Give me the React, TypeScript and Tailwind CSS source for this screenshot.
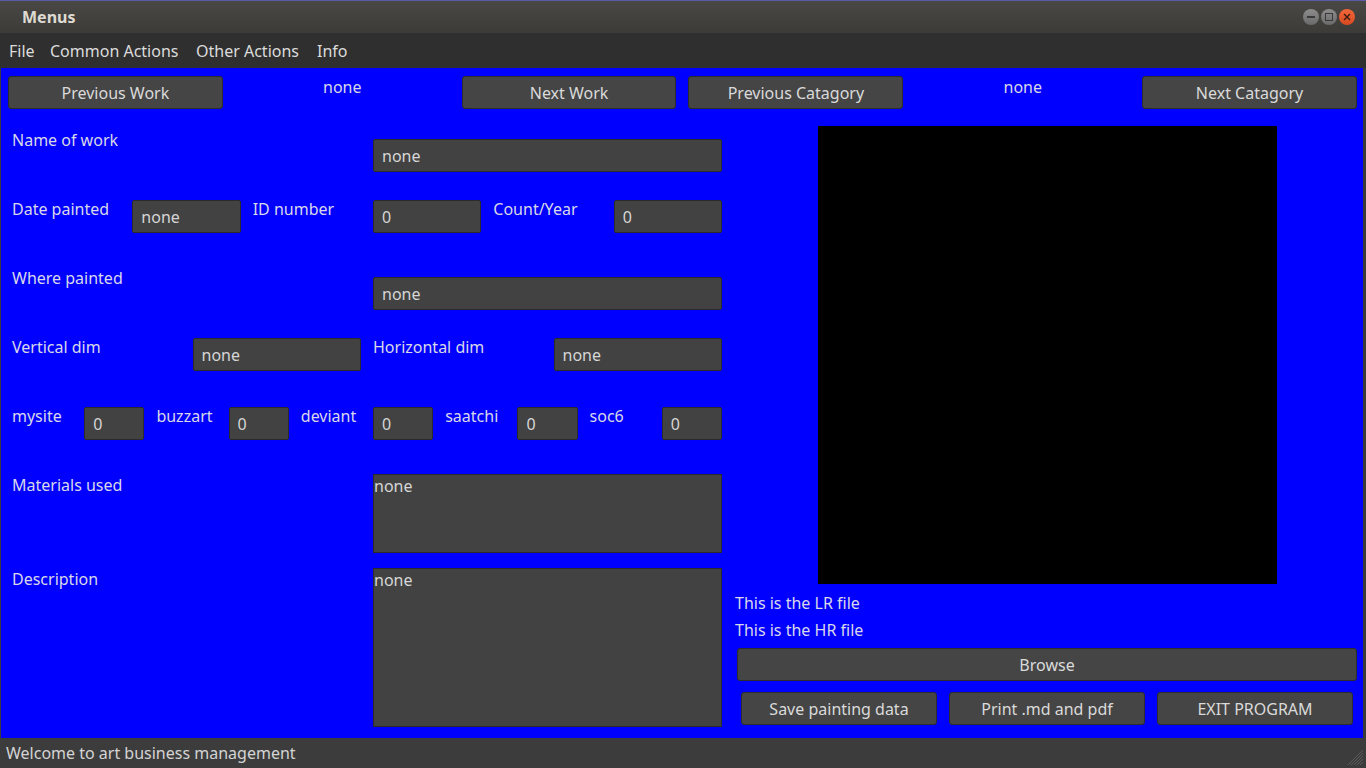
import React from "react";

const btn =
  "h-[33px] bg-[#454545] border border-[#2c2c2c] rounded-[3px] text-[#dadada] flex items-center justify-center leading-none";
const field =
  "h-[33px] bg-[#424242] border border-[#2b2b2b] rounded-[2px] text-[#d6d6d6] flex items-center px-[8px] leading-none";
const label = "text-[#d8d8e8] leading-[20px] whitespace-nowrap";

function Field({ value, className = "" }: { value: string; className?: string }) {
  return <div className={`${field} ${className}`}>{value}</div>;
}

function WindowButtons() {
  return (
    <div className="flex items-center gap-[2px] pr-[11px]">
      <div className="w-[16px] h-[16px] rounded-full bg-gradient-to-b from-[#8d8d8d] to-[#6a6a6a] flex items-center justify-center">
        <div className="w-[8px] h-[2px] bg-[#3a3a3a]" />
      </div>
      <div className="w-[16px] h-[16px] rounded-full bg-gradient-to-b from-[#8d8d8d] to-[#6a6a6a] flex items-center justify-center">
        <div className="w-[8px] h-[8px] border border-[#3a3a3a]" />
      </div>
      <div className="w-[16px] h-[16px] rounded-full bg-gradient-to-b from-[#f2683a] to-[#d9481f] flex items-center justify-center">
        <svg width="8" height="8" viewBox="0 0 8 8">
          <path d="M1 1L7 7M7 1L1 7" stroke="#3a1a10" strokeWidth="1.4" />
        </svg>
      </div>
    </div>
  );
}

export default function App() {
  return (
    <div className="w-[1366px] h-[768px] flex flex-col bg-[#3a3a3a] font-['Noto_Sans',sans-serif] text-[16px] overflow-hidden">
      {/* Title bar */}
      <div className="h-[33px] flex items-center justify-between border-t border-[#5a5aa8] bg-gradient-to-b from-[#4a4844] to-[#3c3b37]">
        <span className="pl-[22px] font-bold text-[#dfdbd2]">Menus</span>
        <WindowButtons />
      </div>

      {/* Menu bar */}
      <div className="h-[35px] flex items-center bg-[#2f2f2f] text-[#dcdcdc] pl-[9px]">
        <span className="w-[41px]">File</span>
        <span className="w-[146px]">Common Actions</span>
        <span className="w-[121px]">Other Actions</span>
        <span>Info</span>
      </div>

      {/* Main area */}
      <div className="flex-1 ml-[1px] mr-[3px] bg-[#0000ff] flex flex-col">
        <div className="ml-[7px] mt-[8px] w-[1349px] grid grid-cols-6 gap-x-[12px]">
          <div className={btn}>Previous Work</div>
          <div className="text-center text-[#d8d8e8] leading-[20px] pt-[1px]">none</div>
          <div className={btn}>Next Work</div>
          <div className={btn}>Previous Catagory</div>
          <div className="text-center text-[#d8d8e8] leading-[20px] pt-[1px]">none</div>
          <div className={btn}>Next Catagory</div>
        </div>

        <div className="flex mt-[17px]">
          {/* Left form */}
          <div className="ml-[11px] w-[710px] flex flex-col">
            <div className="mt-[4px] grid grid-cols-2 gap-x-[12px]">
              <div className={label}>Name of work</div>
              <Field value="none" className="mt-[9px]" />
            </div>

            <div className="mt-[27px] grid grid-cols-6 gap-x-[12px]">
              <div className={label}>Date painted</div>
              <Field value="none" className="mt-[1px]" />
              <div className={label}>ID number</div>
              <Field value="0" className="mt-[1px]" />
              <div className={label}>Count/Year</div>
              <Field value="0" className="mt-[1px]" />
            </div>

            <div className="mt-[35px] grid grid-cols-2 gap-x-[12px]">
              <div className={label}>Where painted</div>
              <Field value="none" className="mt-[9px]" />
            </div>

            <div className="mt-[27px] grid grid-cols-4 gap-x-[12px]">
              <div className={label}>Vertical dim</div>
              <Field value="none" className="mt-[1px]" />
              <div className={label}>Horizontal dim</div>
              <Field value="none" className="mt-[1px]" />
            </div>

            <div className="mt-[35px] grid grid-cols-10 gap-x-[12px]">
              <div className={label}>mysite</div>
              <Field value="0" className="mt-[1px]" />
              <div className={label}>buzzart</div>
              <Field value="0" className="mt-[1px]" />
              <div className={label}>deviant</div>
              <Field value="0" className="mt-[1px]" />
              <div className={label}>saatchi</div>
              <Field value="0" className="mt-[1px]" />
              <div className={label}>soc6</div>
              <Field value="0" className="mt-[1px]" />
            </div>

            <div className="mt-[34px] grid grid-cols-2 gap-x-[12px]">
              <div className={`${label} pt-[1px]`}>Materials used</div>
              <div className="h-[79px] bg-[#424242] border border-[#2b2b2b] text-[#d6d6d6] leading-[22px]">
                none
              </div>
            </div>

            <div className="mt-[15px] grid grid-cols-2 gap-x-[12px]">
              <div className={`${label} pt-[1px]`}>Description</div>
              <div className="h-[159px] bg-[#424242] border border-[#2b2b2b] text-[#d6d6d6] leading-[22px]">
                none
              </div>
            </div>
          </div>

          {/* Right panel */}
          <div className="ml-[12px] w-[623px] flex flex-col">
            <div className="self-center ml-[4px] w-[459px] h-[458px] bg-black" />
            <div className={`${label} pl-[1px] mt-[9px]`}>This is the LR file</div>
            <div className={`${label} pl-[1px] mt-[7px]`}>This is the HR file</div>
            <div className={`${btn} ml-[3px] mt-[8px]`}>Browse</div>
            <div className="ml-[7px] mr-[4px] mt-[11px] grid grid-cols-3 gap-x-[12px]">
              <div className={btn}>Save painting data</div>
              <div className={btn}>Print .md and pdf</div>
              <div className={btn}>EXIT PROGRAM</div>
            </div>
          </div>
        </div>
      </div>

      {/* Status bar */}
      <div className="h-[30px] flex items-center justify-between bg-[#3c3c3c] text-[#d4d4d4]">
        <span className="pl-[6px]">Welcome to art business management</span>
        <svg width="16" height="16" viewBox="0 0 16 16" className="self-end mb-[2px] mr-[2px]">
          <path d="M15 3L3 15M15 6L6 15M15 9L9 15M15 12L12 15M15 0L0 15" stroke="#5a5a5a" strokeWidth="1" />
        </svg>
      </div>
    </div>
  );
}
